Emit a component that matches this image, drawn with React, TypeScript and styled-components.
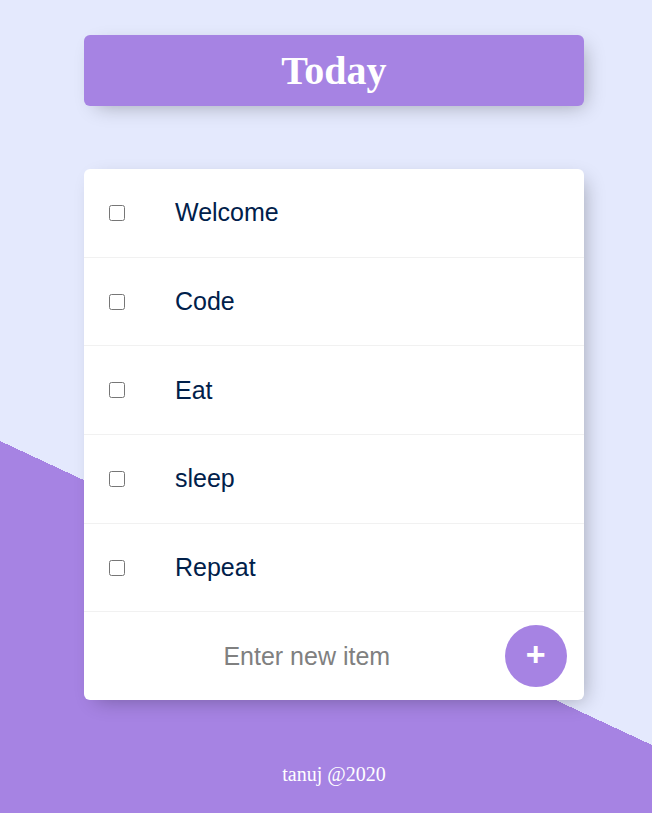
import styled, { createGlobalStyle } from "styled-components";

const GlobalStyle = createGlobalStyle`
  html, body {
    margin: 0;
    padding: 0;
    overflow: hidden;
  }
  body {
    font-family: "Liberation Sans", Arial, sans-serif;
    background: #e4e9fd;
  }
`;

const Page = styled.div`
  min-height: 1186px;
  background-color: #e4e9fd;
  background-image: linear-gradient(25deg, #a683e3 50%, #e4e9fd 50%);
  padding: 35px 0 0 16px;
  box-sizing: border-box;
`;

const Box = styled.div<{ mb?: string }>`
  width: 500px;
  margin: 0 auto ${({ mb }) => mb ?? "0"};
  background: #fff;
  border-radius: 6px;
  box-shadow: 6px 6px 19px -6px rgba(0, 0, 0, 0.3);
  overflow: hidden;
`;

const Heading = styled(Box)`
  background: #a683e3;
  text-align: center;
`;

const Title = styled.h1`
  margin: 0;
  padding: 12.5px;
  color: #fff;
  font-family: "Liberation Serif", "Times New Roman", serif;
  font-size: 40px;
  font-weight: 700;
  line-height: 46px;
`;

const Item = styled.div`
  min-height: 87.7px;
  display: flex;
  align-items: center;
  border-bottom: 1px solid #f1f1f1;
`;

const Check = styled.input`
  margin: 25px;
  width: 16px;
  height: 16px;
  flex-shrink: 0;
`;

const Label = styled.p`
  margin: 0;
  padding: 25px;
  font-size: 25px;
  font-weight: 200;
  color: #00204a;
`;

const Form = styled.form`
  height: 87.5px;
  display: flex;
  align-items: center;
  padding: 0 17px 0 25px;
`;

const TextInput = styled.input`
  flex: 1;
  min-width: 0;
  height: 75px;
  border: none;
  text-align: center;
  font-family: "Liberation Sans", Arial, sans-serif;
  font-size: 25px;
  font-weight: 200;
  color: #00204a;
  background: transparent;
  &::placeholder {
    color: grey;
    opacity: 1;
  }
  &:focus {
    outline: none;
  }
`;

const AddButton = styled.button`
  width: 62.5px;
  height: 62.5px;
  flex-shrink: 0;
  border: 0;
  border-radius: 50%;
  background: #a683e3;
  color: #fff;
  font-family: "Liberation Sans", Arial, sans-serif;
  font-size: 34px;
  font-weight: 700;
  line-height: 1;
  padding: 0 0 4px;
  display: flex;
  align-items: center;
  justify-content: center;
`;

const Footer = styled.footer`
  margin-top: 63px;
  text-align: center;
  color: #fff;
  font-family: "Liberation Serif", "Times New Roman", serif;
  font-size: 20px;
`;

const items = ["Welcome", "Code", "Eat", "sleep", "Repeat"];

export default function App() {
  return (
    <>
      <GlobalStyle />
      <Page>
        <Heading mb="63px">
          <Title>Today</Title>
        </Heading>
        <Box>
          {items.map((it) => (
            <Item key={it}>
              <Check type="checkbox" />
              <Label>{it}</Label>
            </Item>
          ))}
          <Form onSubmit={(e) => e.preventDefault()}>
            <TextInput type="text" placeholder="Enter new item" />
            <AddButton type="submit">+</AddButton>
          </Form>
        </Box>
        <Footer>tanuj @2020</Footer>
      </Page>
    </>
  );
}
